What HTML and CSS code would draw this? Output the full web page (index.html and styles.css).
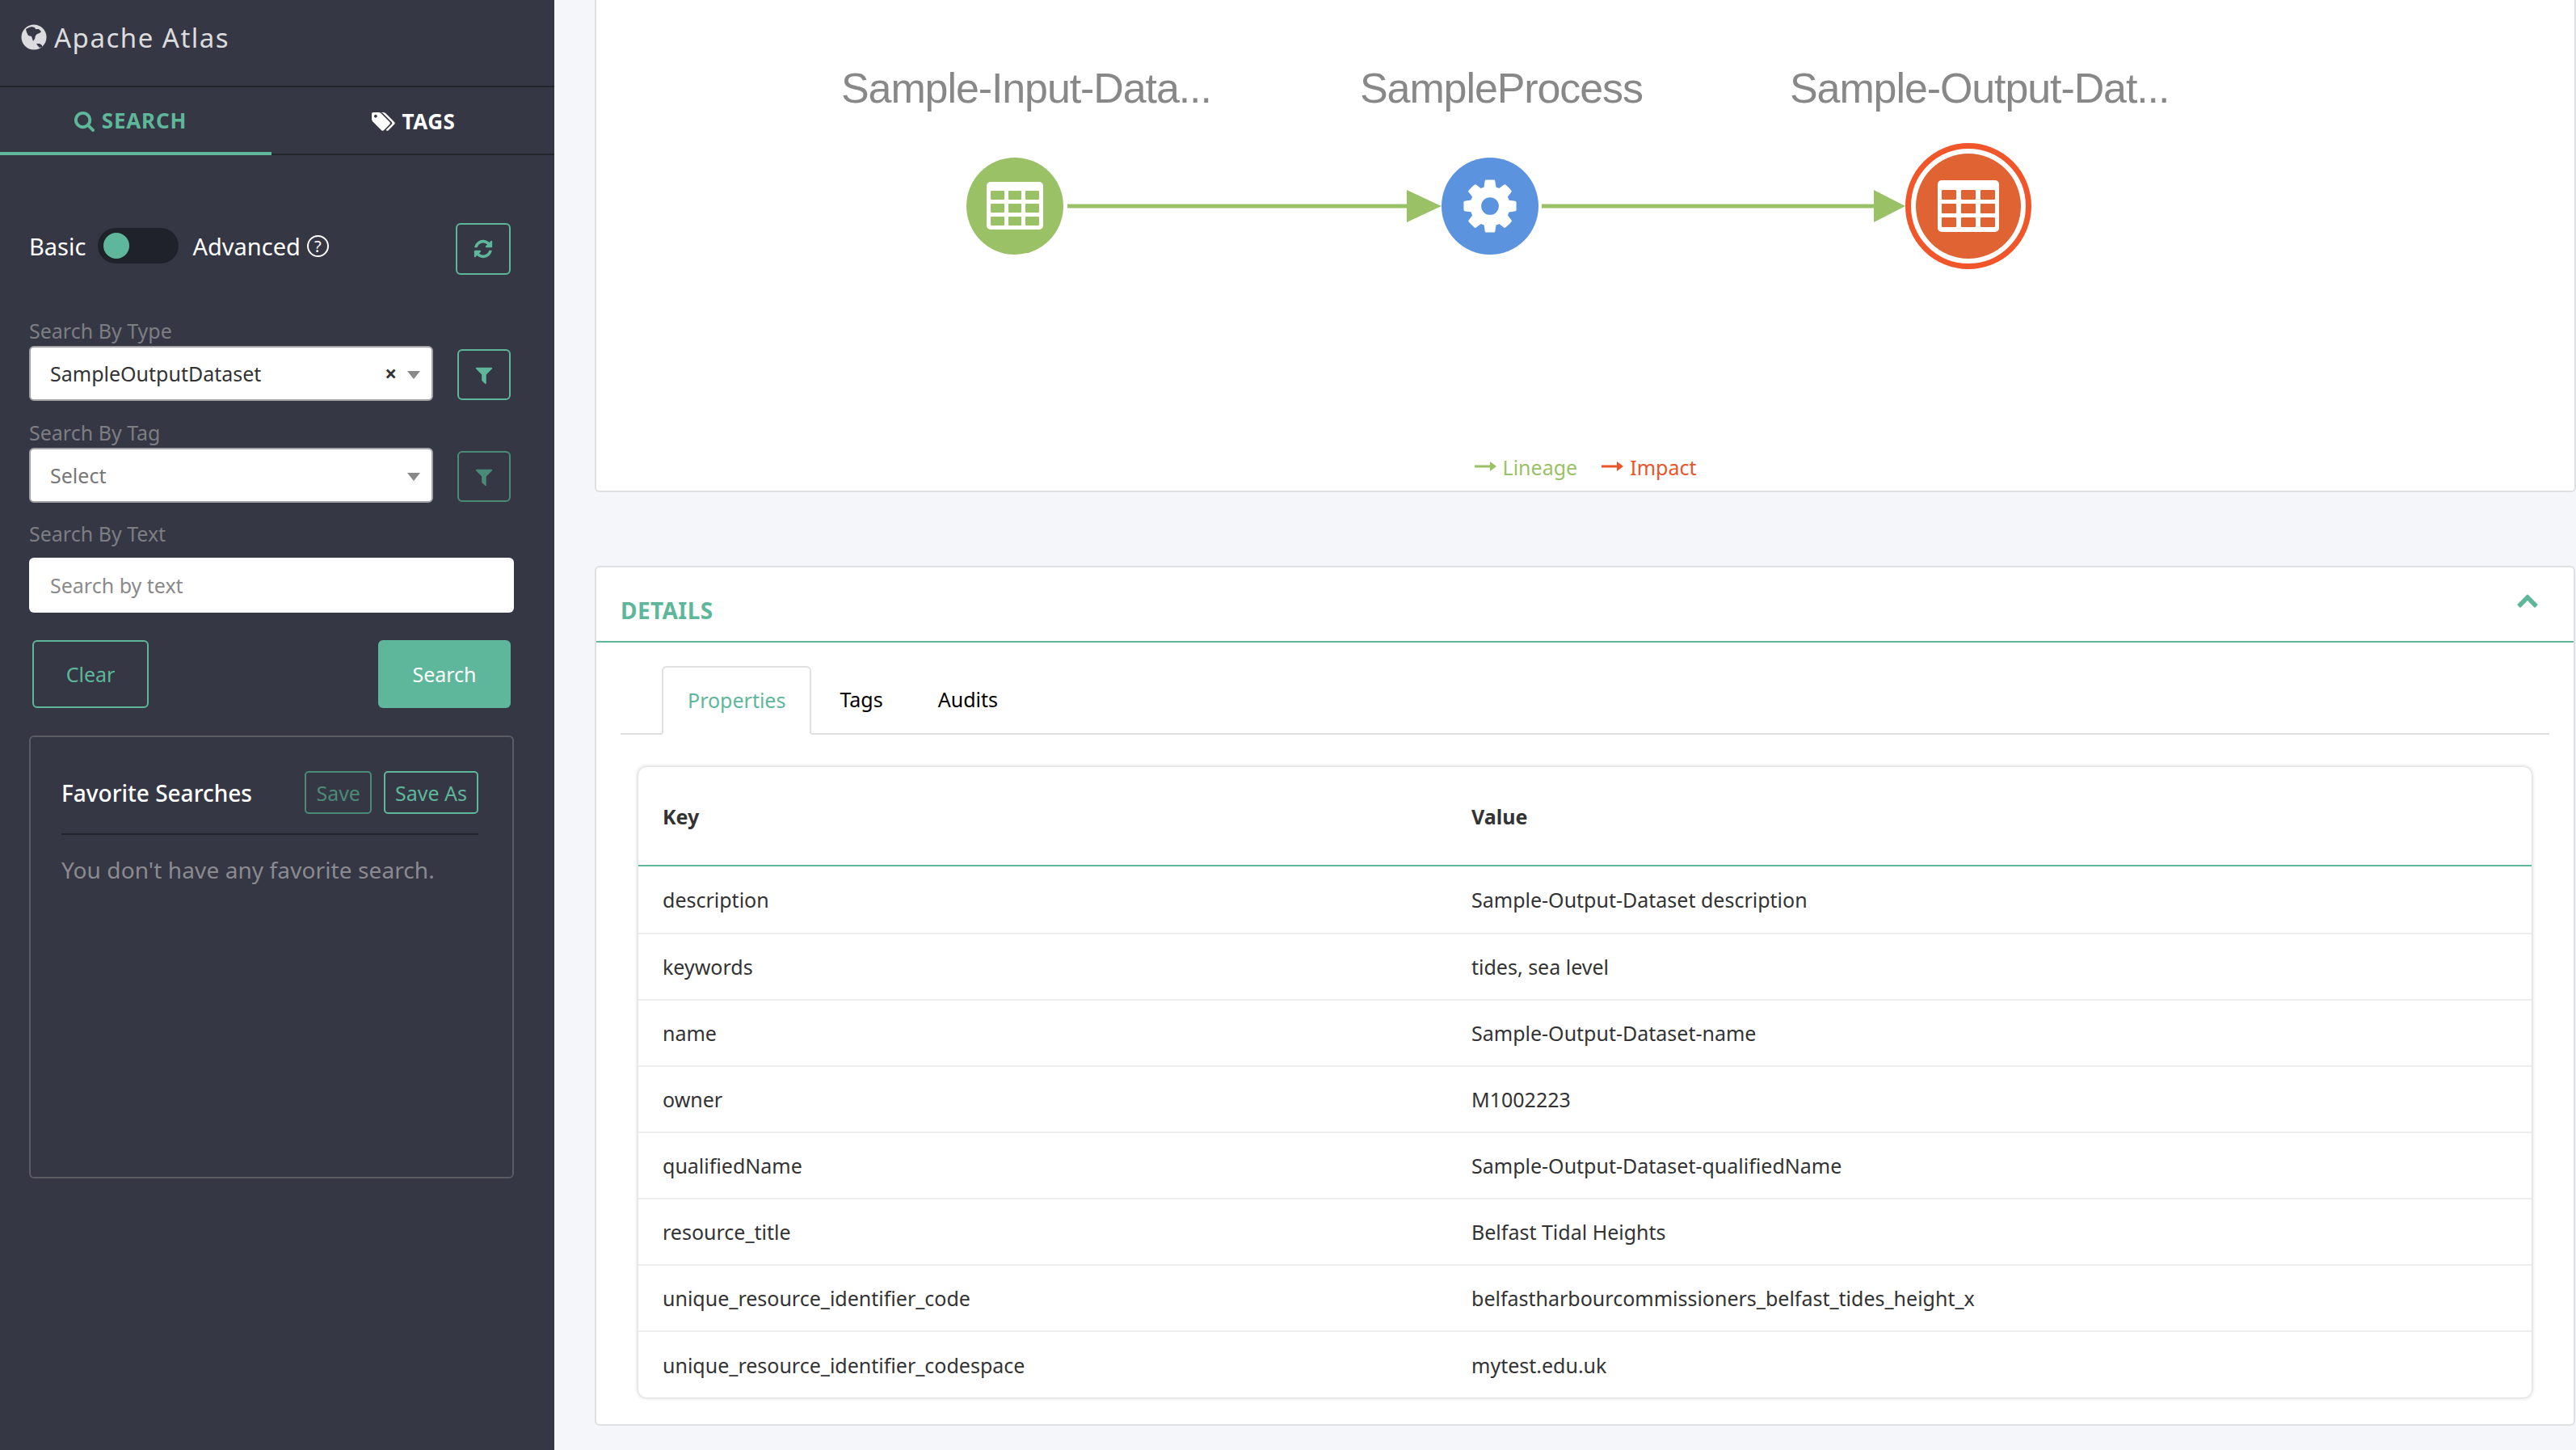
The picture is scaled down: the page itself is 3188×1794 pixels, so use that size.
FILE: index.html
```html
<!DOCTYPE html>
<html>
<head>
  <meta charset="utf-8">
  <title>Apache Atlas</title>
  <link rel="stylesheet" href="styles.css">
</head>
<body>
  <aside class="sidebar">
    <div class="brand">
      <svg class="brand-icon" viewBox="0 0 32 32">
        <circle cx="16" cy="16" r="15.500" fill="#dcdcde"/>
        <path d="M6 6l4-2 3-1 4 1 1 2 4 0 3 3-2 2-3 1-2 2-1 4-2 3-1-3-1-3-4-1-2-4z" fill="#353744"/>
        <path d="M19 24l4 0 3 2 0 2-3 1-2-2z" fill="#353744"/>
      </svg>
      <span>Apache Atlas</span>
    </div>

    <nav class="side-tabs">
      <a class="side-tab active">
        <svg class="tab-icon" viewBox="0 0 1792 1792"><path d="M1216 832q0-185-131.500-316.500t-316.500-131.500-316.500 131.500-131.500 316.500 131.500 316.500 316.500 131.500 316.500-131.500 131.500-316.500zm512 832q0 52-38 90t-90 38q-54 0-90-38l-343-342q-179 124-399 124-143 0-273.500-55.500t-225-150-150-225-55.500-273.500 55.500-273.500 150-225 225-150 273.500-55.500 273.500 55.500 225 150 150 225 55.500 273.500q0 220-124 399l343 343q37 37 37 90z"/></svg>
        SEARCH
      </a>
      <a class="side-tab">
        <svg class="tab-icon tags" viewBox="0 0 1920 1792"><path d="M448 448q0-53-37.500-90.500t-90.500-37.500-90.500 37.500-37.500 90.500 37.500 90.500 90.500 37.500 90.500-37.500 37.500-90.500zm1067 576q0 53-37 90l-491 492q-39 37-91 37-53 0-90-37l-715-716q-38-37-64.500-101t-26.500-117v-416q0-52 38-90t90-38h416q53 0 117 26.500t102 64.500l715 714q37 39 37 91zm384 0q0 53-37 90l-491 492q-39 37-91 37-36 0-59-14t-53-45l470-470q37-37 37-90 0-52-37-91l-715-714q-38-38-102-64.500t-117-26.500h224q53 0 117 26.500t102 64.500l715 714q37 39 37 91z"/></svg>
        TAGS
      </a>
    </nav>

    <div class="search-panel">
      <div class="mode-row">
        <span class="mode-label">Basic</span>
        <span class="toggle"><span class="knob"></span></span>
        <span class="mode-label">Advanced</span>
        <span class="help">?</span>
        <button class="icon-btn refresh">
          <svg viewBox="0 0 1792 1792"><path d="M1639 1056q0 5-1 7-64 268-268 434.500t-478 166.500q-146 0-282.500-55t-243.500-157l-129 129q-19 19-45 19t-45-19-19-45v-448q0-26 19-45t45-19h448q26 0 45 19t19 45-19 45l-137 137q71 66 161 102t187 36q134 0 250-65t186-179q11-17 53-117 8-23 30-23h192q13 0 22.500 9.500t9.500 22.500zm25-800v448q0 26-19 45t-45 19h-448q-26 0-45-19t-19-45 19-45l138-138q-148-137-349-137-134 0-250 65t-186 179q-11 17-53 117-8 23-30 23h-199q-13 0-22.500-9.500t-9.500-22.500v-7q65-268 270-434.500t480-166.500q146 0 284 55.500t245 156.500l130-129q19-19 45-19t45 19 19 45z"/></svg>
        </button>
      </div>

      <label class="field-label first">Search By Type</label>
      <div class="select-row">
        <div class="select">
          <span class="select-value">SampleOutputDataset</span>
          <span class="select-clear">×</span>
          <span class="select-arrow"></span>
        </div>
        <button class="icon-btn filter">
          <svg viewBox="0 0 1792 1792"><path d="M1595 295q17 41-14 70l-493 493v742q0 42-39 59-13 5-25 5-27 0-45-19l-256-256q-19-19-19-45v-486l-493-493q-31-29-14-70 17-39 59-39h1280q42 0 59 39z"/></svg>
        </button>
      </div>

      <label class="field-label">Search By Tag</label>
      <div class="select-row">
        <div class="select">
          <span class="select-value placeholder">Select</span>
          <span class="select-arrow"></span>
        </div>
        <button class="icon-btn filter dim">
          <svg viewBox="0 0 1792 1792"><path d="M1595 295q17 41-14 70l-493 493v742q0 42-39 59-13 5-25 5-27 0-45-19l-256-256q-19-19-19-45v-486l-493-493q-31-29-14-70 17-39 59-39h1280q42 0 59 39z"/></svg>
        </button>
      </div>

      <label class="field-label text-label">Search By Text</label>
      <input class="text-input" type="text" placeholder="Search by text">

      <div class="action-row">
        <button class="btn-outline">Clear</button>
        <button class="btn-solid">Search</button>
      </div>

      <section class="favorites">
        <div class="favorites-head">
          <span class="favorites-title">Favorite Searches</span>
          <button class="btn-small dim">Save</button>
          <button class="btn-small">Save As</button>
        </div>
        <p class="favorites-empty">You don't have any favorite search.</p>
      </section>
    </div>
  </aside>

  <main class="content">
    <section class="lineage-card">
      <svg class="lineage" viewBox="738 0 2448 540">
        <text class="node-label" x="1041" y="127">Sample-Input-Data...</text>
        <text class="node-label" x="1683" y="127">SampleProcess</text>
        <text class="node-label" x="2215" y="127">Sample-Output-Dat...</text>

        <rect x="1321" y="252.500" width="424" height="5" fill="#9bc167"/>
        <polygon points="1741,235 1784,255 1741,275" fill="#9bc167"/>
        <rect x="1908" y="252.500" width="414" height="5" fill="#9bc167"/>
        <polygon points="2319,235 2358,255 2319,275" fill="#9bc167"/>

        <circle cx="1256" cy="255" r="60" fill="#9bc167"/>
        <rect x="1221" y="225" width="70" height="59" rx="5" fill="#fff"/>
        <g fill="#9bc167">
          <rect x="1226" y="236" width="17" height="11" rx="1"/>
          <rect x="1248" y="236" width="16" height="11" rx="1"/>
          <rect x="1269" y="236" width="17" height="11" rx="1"/>
          <rect x="1226" y="252" width="17" height="11" rx="1"/>
          <rect x="1248" y="252" width="16" height="11" rx="1"/>
          <rect x="1269" y="252" width="17" height="11" rx="1"/>
          <rect x="1226" y="268" width="17" height="11" rx="1"/>
          <rect x="1248" y="268" width="16" height="11" rx="1"/>
          <rect x="1269" y="268" width="17" height="11" rx="1"/>
        </g>

        <circle cx="1844" cy="255" r="60" fill="#5b93df"/>
        <svg x="1806" y="217" width="76" height="76" viewBox="0 0 1792 1792"><path fill="#fff" d="M1152 896q0-106-75-181t-181-75-181 75-75 181 75 181 181 75 181-75 75-181zm512-109v222q0 12-8 23t-20 13l-185 28q-19 54-39 91 35 50 107 138 10 12 10 25t-9 23q-27 37-99 108t-94 71q-12 0-26-9l-138-108q-44 23-91 38-16 136-29 186-7 28-36 28h-222q-14 0-24.500-8.500t-11.500-21.500l-28-184q-49-16-90-37l-141 107q-10 9-25 9-14 0-25-11-126-114-165-168-7-10-7-23 0-12 8-23 15-21 51-66.500t54-70.500q-27-50-41-99l-183-27q-13-2-21-12.500t-8-23.500v-222q0-12 8-23t19-13l186-28q14-46 39-92-40-57-107-138-10-12-10-24 0-10 9-23 26-36 98.500-107.500t94.500-71.500q13 0 26 10l138 107q44-23 91-38 16-136 29-186 7-28 36-28h222q14 0 24.500 8.500t11.500 21.500l28 184q49 16 90 37l142-107q9-9 24-9 13 0 25 10 129 119 165 170 7 8 7 22 0 12-8 23-15 21-51 66.500t-54 70.500q26 50 41 98l183 28q13 2 21 12.500t8 23.500z"/></svg>

        <circle cx="2436" cy="255" r="74.500" fill="#fff" stroke="#f0562a" stroke-width="7"/>
        <circle cx="2436" cy="255" r="65" fill="#e06334"/>
        <rect x="2398" y="223" width="76" height="64" rx="5" fill="#fff"/>
        <g fill="#e06334">
          <rect x="2403" y="235" width="18" height="12" rx="1"/>
          <rect x="2427" y="235" width="18" height="12" rx="1"/>
          <rect x="2451" y="235" width="18" height="12" rx="1"/>
          <rect x="2403" y="252" width="18" height="12" rx="1"/>
          <rect x="2427" y="252" width="18" height="12" rx="1"/>
          <rect x="2451" y="252" width="18" height="12" rx="1"/>
          <rect x="2403" y="269" width="18" height="12" rx="1"/>
          <rect x="2427" y="269" width="18" height="12" rx="1"/>
          <rect x="2451" y="269" width="18" height="12" rx="1"/>
        </g>
      </svg>
      <div class="legend">
        <span class="legend-item lineage-key">
          <svg viewBox="0 0 27 14"><path d="M0 5.500h19V1l8 6-8 6V8.500H0z"/></svg>
          Lineage
        </span>
        <span class="legend-item impact-key">
          <svg viewBox="0 0 27 14"><path d="M0 5.500h19V1l8 6-8 6V8.500H0z"/></svg>
          Impact
        </span>
      </div>
    </section>

    <section class="details-card">
      <header class="details-head">
        <h2>DETAILS</h2>
        <svg class="chevron" viewBox="0 0 1792 1792" preserveAspectRatio="none"><path d="M1683 1331l-166 165q-19 19-45 19t-45-19l-531-531-531 531q-19 19-45 19t-45-19l-166-165q-19-19-19-45.500t19-45.500l742-741q19-19 45-19t45 19l742 741q19 19 19 45.500t-19 45.500z"/></svg>
      </header>
      <div class="details-tabs">
        <a class="details-tab active">Properties</a>
        <a class="details-tab">Tags</a>
        <a class="details-tab">Audits</a>
      </div>
      <div class="table-card">
        <table class="props">
          <thead>
            <tr><th>Key</th><th>Value</th></tr>
          </thead>
          <tbody>
            <tr><td>description</td><td>Sample-Output-Dataset description</td></tr>
            <tr><td>keywords</td><td>tides, sea level</td></tr>
            <tr><td>name</td><td>Sample-Output-Dataset-name</td></tr>
            <tr><td>owner</td><td>M1002223</td></tr>
            <tr><td>qualifiedName</td><td>Sample-Output-Dataset-qualifiedName</td></tr>
            <tr><td>resource_title</td><td>Belfast Tidal Heights</td></tr>
            <tr><td>unique_resource_identifier_code</td><td>belfastharbourcommissioners_belfast_tides_height_x</td></tr>
            <tr><td>unique_resource_identifier_codespace</td><td>mytest.edu.uk</td></tr>
          </tbody>
        </table>
      </div>
    </section>
  </main>
</body>
</html>
```

FILE: styles.css
```css
/* Basic reset */
* {
  box-sizing: border-box;
}
html, body {
  margin: 0;
  height: 100%;
}
body {
  display: flex;
  height: 1794px;
  overflow: hidden;
  background-color: #f5f6fa;
  font-family: "Noto Sans", sans-serif;
  font-size: 25px;
  color: #333;
}
button {
  font-family: inherit;
  background: none;
  padding: 0;
}

/* Sidebar */
.sidebar {
  width: 686px;
  flex: none;
  background-color: #353744;
}
.brand {
  height: 108px;
  padding: 0 0 14px 26px;
  display: flex;
  align-items: center;
  gap: 9px;
  border-bottom: 2px solid #23252d;
  color: #dcdcde;
  font-size: 33px;
  letter-spacing: 1.5px;
}
.brand-icon {
  width: 32px;
  height: 32px;
}
.side-tabs {
  display: flex;
  height: 84px;
  border-bottom: 2px solid #23252d;
}
.side-tab {
  width: 336px;
  height: 84px;
  display: flex;
  align-items: center;
  justify-content: center;
  gap: 8px;
  font-size: 26px;
  font-weight: 700;
  letter-spacing: 0.8px;
  color: #fff;
  padding: 2px 14px 0 0;
}
.side-tab:last-child {
  width: 350px;
  padding: 0;
  letter-spacing: 0.5px;
}
.side-tab.active {
  color: #5eb79a;
  border-bottom: 4px solid #5eb79a;
}
.tab-icon {
  width: 27px;
  height: 27px;
  fill: #5eb79a;
}
.tab-icon.tags {
  width: 31px;
  fill: #fff;
}

.search-panel {
  padding: 84px 50px 0 36px;
}
.mode-row {
  display: flex;
  align-items: center;
  height: 64px;
  color: #fff;
}
.mode-label {
  font-size: 29px;
  padding-bottom: 8px;
}
.toggle {
  width: 100px;
  height: 44px;
  margin: 0 17px 8px 15px;
  padding: 6px;
  background-color: #20222b;
  border-radius: 22px;
}
.knob {
  display: block;
  width: 32px;
  height: 32px;
  margin-left: 1px;
  border-radius: 50%;
  background-color: #5eb79a;
}
.help {
  width: 27px;
  height: 27px;
  margin: 0 0 8px 8px;
  border: 2px solid #fff;
  border-radius: 50%;
  display: flex;
  align-items: center;
  justify-content: center;
  font-size: 20px;
}
.icon-btn {
  border: 2px solid #5eb79a;
  border-radius: 6px;
  display: flex;
  align-items: center;
  justify-content: center;
}
.icon-btn svg {
  fill: #5eb79a;
}
.refresh {
  width: 68px;
  height: 64px;
  margin-left: auto;
  margin-right: 4px;
}
.refresh svg {
  width: 26px;
  height: 26px;
}
.filter {
  width: 66px;
  height: 63px;
  margin: 4px 0 0 30px;
}
.filter svg {
  width: 26px;
  height: 26px;
}
.filter.dim {
  border-color: #4c8a78;
}
.filter.dim svg {
  fill: #4c8a78;
}

.field-label {
  display: block;
  height: 36px;
  line-height: 34px;
  margin-top: 22px;
  color: #7d7e84;
  font-size: 25px;
}
.field-label.first {
  margin-top: 52px;
}
.field-label.text-label {
  line-height: 36px;
  margin-top: 20px;
}
.select-row {
  display: flex;
}
.select {
  width: 500px;
  height: 68px;
  display: flex;
  align-items: center;
  padding: 0 14px 0 24px;
  background-color: #fff;
  border: 2px solid #a3a3a6;
  border-radius: 6px;
  color: #333;
}
.select-value {
  flex: 1;
}
.select-value.placeholder {
  color: #777;
}
.select-clear {
  font-weight: 700;
  font-size: 26px;
  margin-right: 13px;
}
.select-arrow {
  width: 0;
  height: 0;
  margin-top: 3px;
  border-left: 8px solid transparent;
  border-right: 8px solid transparent;
  border-top: 10px solid #888;
}
.text-input {
  display: block;
  width: 600px;
  height: 68px;
  margin-top: 12px;
  padding: 0 26px;
  border: none;
  border-radius: 6px;
  background-color: #fff;
  font-family: inherit;
  font-size: 25px;
}
.text-input::placeholder {
  color: #8a8a8a;
  opacity: 1;
}
.action-row {
  display: flex;
  justify-content: space-between;
  margin-top: 34px;
  padding: 0 4px;
}
.btn-outline, .btn-solid {
  height: 84px;
  border-radius: 6px;
  font-size: 25px;
}
.btn-outline {
  width: 144px;
  border: 2px solid #5eb79a;
  color: #5eb79a;
}
.btn-solid {
  width: 164px;
  border: none;
  background-color: #5eb79a;
  color: #fff;
}

.favorites {
  height: 548px;
  margin-top: 34px;
  padding: 42px 42px 0 38px;
  border: 2px solid #5b5c64;
  border-radius: 6px;
}
.favorites-head {
  display: flex;
  align-items: center;
  gap: 15px;
  padding-bottom: 24px;
  border-bottom: 2px solid #23252d;
}
.favorites-title {
  flex: 1;
  color: #fff;
  font-size: 28px;
  font-weight: 500;
}
.btn-small {
  height: 53px;
  padding: 0 12px;
  border: 2px solid #5eb79a;
  border-radius: 5px;
  color: #5eb79a;
  font-size: 25px;
}
.btn-small.dim {
  border-color: #4c8a78;
  color: #4c8a78;
}
.favorites-empty {
  margin: 24px 0 0;
  color: #8a8b90;
  font-size: 28px;
  letter-spacing: 0.1px;
}

/* Main column */
.content {
  flex: 1;
  padding-left: 50px;
}
.lineage-card {
  height: 609px;
  background-color: #fff;
  border: 2px solid #dfe0e2;
  border-top: none;
  border-radius: 0 0 6px 6px;
}
.lineage {
  display: block;
  width: 2448px;
  height: 540px;
}
.node-label {
  font-family: "Liberation Sans", sans-serif;
  font-size: 52px;
  letter-spacing: -1.1px;
  fill: #888;
}
.legend {
  display: flex;
  justify-content: center;
  gap: 30px;
  height: 60px;
  padding-top: 20px;
  font-size: 25px;
}
.legend-item {
  display: flex;
  align-items: center;
  gap: 8px;
  height: 36px;
}
.legend-item svg {
  width: 27px;
  height: 14px;
  margin-top: -2px;
}
.lineage-key {
  color: #9bc167;
}
.lineage-key svg {
  fill: #9bc167;
}
.impact-key {
  color: #e8552b;
}
.impact-key svg {
  fill: #e8552b;
}

.details-card {
  height: 1064px;
  margin-top: 91px;
  margin-right: 1px;
  background-color: #fff;
  border: 2px solid #dfe0e2;
  border-radius: 6px;
}
.details-head {
  display: flex;
  align-items: center;
  justify-content: space-between;
  height: 93px;
  padding: 14px 43px 0 30px;
  border-bottom: 2px solid #5eb79a;
}
.details-head h2 {
  margin: 0;
  color: #5eb79a;
  font-size: 28px;
  font-weight: 700;
  letter-spacing: 0.4px;
}
.chevron {
  width: 28px;
  height: 28px;
  margin-top: -26px;
  fill: #5eb79a;
}
.details-tabs {
  display: flex;
  height: 114px;
  margin: 0 30px;
  padding: 29px 0 0 51px;
  border-bottom: 2px solid #dfe0e2;
}
.details-tab {
  height: 85px;
  line-height: 82px;
  padding: 0 34px;
  color: #000;
  font-size: 25px;
}
.details-tab.active {
  margin-right: 1px;
  color: #5eb79a;
  background-color: #fff;
  border: 2px solid #dfe0e2;
  border-bottom-color: #fff;
  border-radius: 6px 6px 0 0;
  line-height: 80px;
  padding: 0 30px;
}
.table-card {
  width: 2343px;
  margin: 40px 0 0 52px;
  background-color: #fff;
  border-radius: 10px;
  box-shadow: 0 0 4px 1px rgba(0,0,0,0.18);
}
.props {
  width: 100%;
  border-collapse: collapse;
  table-layout: fixed;
}
.props th, .props td {
  padding: 0 0 0 30px;
  text-align: left;
}
.props th:first-child, .props td:first-child {
  width: 1001px;
}
.props th {
  height: 122px;
  font-size: 25px;
  font-weight: 700;
  border-bottom: 2px solid #5eb79a;
}
.props td {
  height: 82px;
  font-size: 25px;
  border-bottom: 2px solid #eeeeef;
}
.props tbody tr:first-child td {
  height: 84px;
}
.props tr:last-child td {
  border-bottom: none;
}
```
